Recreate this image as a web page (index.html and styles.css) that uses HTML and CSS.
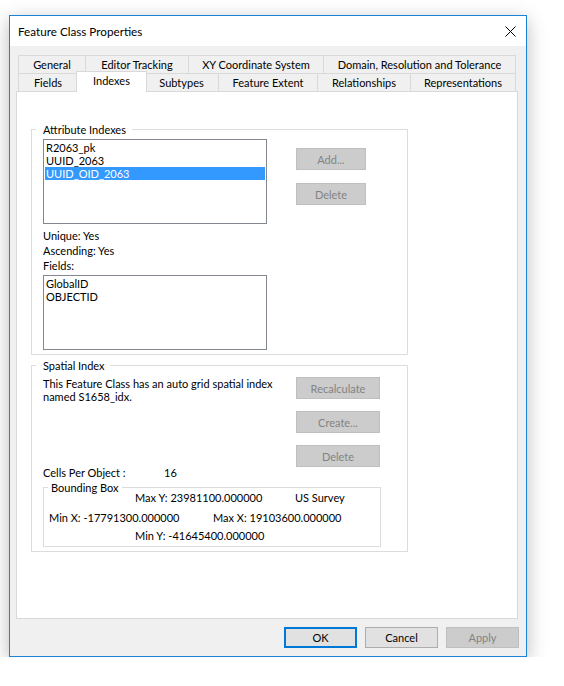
FILE: index.html
```html
<!DOCTYPE html>
<html>
<head>
<meta charset="utf-8">
<title>Feature Class Properties</title>
<link rel="stylesheet" href="styles.css">
</head>
<body>
<div class="window">
  <div class="titlebar">
    <span class="title">Feature Class Properties</span>
    <svg class="close" viewBox="0 0 11 11" width="11" height="11"><path d="M0.5 0.5 L10.5 10.5 M10.5 0.5 L0.5 10.5" stroke="#000" stroke-width="1" fill="none"/></svg>
  </div>
  <div class="tabs">
    <div class="tabrow">
      <div class="tab first t-general">General</div>
      <div class="tab t-editor">Editor Tracking</div>
      <div class="tab t-xy">XY Coordinate System</div>
      <div class="tab t-domain">Domain, Resolution and Tolerance</div>
    </div>
    <div class="tabrow">
      <div class="tab first t-fields">Fields</div>
      <div class="tab active">Indexes</div>
      <div class="tab t-subtypes">Subtypes</div>
      <div class="tab t-extent">Feature Extent</div>
      <div class="tab t-rel">Relationships</div>
      <div class="tab t-rep">Representations</div>
    </div>
  </div>
  <div class="panel">
    <div class="group g-attr">
      <span class="legend">Attribute Indexes</span>
      <div class="attr-body">
        <div class="attr-left">
          <div class="listbox list-idx">
            <div class="item">R2063_pk</div>
            <div class="item">UUID_2063</div>
            <div class="item selected">UUID_OID_2063</div>
          </div>
          <div class="labels">
            <div class="label">Unique: Yes</div>
            <div class="label">Ascending: Yes</div>
            <div class="label">Fields:</div>
          </div>
          <div class="listbox list-fields">
            <div class="item">GlobalID</div>
            <div class="item">OBJECTID</div>
          </div>
        </div>
        <div class="btncol attr-btns">
          <button class="btn disabled b-small">Add...</button>
          <button class="btn disabled b-small">Delete</button>
        </div>
      </div>
    </div>
    <div class="group g-spatial">
      <span class="legend legend-sp">Spatial Index</span>
      <div class="spatial-top">
        <div class="spatial-left">
          <div class="desc">This Feature Class has an auto grid spatial index<br>named S1658_idx.</div>
          <div class="cells"><span class="cells-label">Cells Per Object :</span><span>16</span></div>
        </div>
        <div class="btncol sp-btns">
          <button class="btn disabled b-wide">Recalculate</button>
          <button class="btn disabled b-wide">Create...</button>
          <button class="btn disabled b-wide">Delete</button>
        </div>
      </div>
      <div class="bbox">
        <span class="legend legend-bb">Bounding Box</span>
        <div class="bb-row bb-r1"><span class="bb-maxy">Max Y: 23981100.000000</span><span>US Survey</span></div>
        <div class="bb-row bb-r2"><span class="bb-minx">Min X: -17791300.000000</span><span>Max X: 19103600.000000</span></div>
        <div class="bb-row bb-r3"><span>Min Y: -41645400.000000</span></div>
      </div>
    </div>
  </div>
  <div class="footer">
    <button class="btn b-foot btn-ok">OK</button>
    <button class="btn b-foot">Cancel</button>
    <button class="btn b-foot disabled">Apply</button>
  </div>
</div>
</body>
</html>
```
FILE: styles.css
```css
html, body {
  margin: 0;
  padding: 0;
  background: #ffffff;
}
body {
  font-family: Lato, "Noto Sans", "DejaVu Sans", sans-serif;
  font-size: 11px;
  color: #000;
  overflow: hidden;
}
.window {
  box-sizing: border-box;
  width: 518px;
  height: 642px;
  margin: 15px 0 0 9px;
  border: 1px solid #1883d7;
  background: #f0f0f0;
  box-shadow: 0 5px 18px rgba(0, 0, 0, 0.28);
  display: flex;
  flex-direction: column;
}
.titlebar {
  height: 30px;
  background: #fff;
  display: flex;
  align-items: center;
  justify-content: space-between;
  padding: 0 10px 0 8px;
}
.title {
  line-height: 30px;
  font-size: 11.7px;
}
.close {
  display: block;
}
.tabs {
  margin: 9px 0 0 8px;
}
.tabrow {
  display: flex;
  align-items: flex-start;
  height: 18px;
}
.tab {
  box-sizing: border-box;
  height: 18px;
  border-top: 1px solid #d9d9d9;
  border-right: 1px solid #d9d9d9;
  background: #f0f0f0;
  text-align: center;
  line-height: 17px;
  white-space: nowrap;
}
.tab.first {
  border-left: 1px solid #d9d9d9;
}
.t-general { width: 68px; }
.t-editor { width: 103px; }
.t-xy { width: 135px; }
.t-domain { width: 192px; }
.t-fields { width: 60px; }
.t-subtypes { width: 74px; }
.t-extent { width: 99px; }
.t-rel { width: 93px; }
.t-rep { width: 105px; }
.tab.active {
  position: relative;
  z-index: 1;
  width: 71px;
  height: 21px;
  margin: -2px -2px -1px -2px;
  border-left: 1px solid #d9d9d9;
  background: #fff;
  padding-bottom: 3px;
}
.panel {
  box-sizing: border-box;
  width: 502px;
  height: 528px;
  margin-left: 6px;
  background: #fff;
  border: 1px solid #d9d9d9;
  padding: 37px 0 0 14px;
}
.group {
  position: relative;
  box-sizing: border-box;
  width: 377px;
  border: 1px solid #dcdcdc;
}
.legend {
  position: absolute;
  top: -8px;
  left: 4px;
  line-height: 15px;
  padding: 0 6px 0 7px;
  background: #fff;
  white-space: nowrap;
}
.legend-sp {
  padding-right: 5px;
}
.g-attr {
  height: 226px;
  padding: 9px 0 0 11px;
}
.attr-body {
  display: flex;
}
.attr-left {
  width: 224px;
}
.listbox {
  box-sizing: border-box;
  border: 1px solid #828790;
  padding: 1px;
  background: #fff;
}
.list-idx {
  height: 85px;
}
.list-fields {
  height: 75px;
  margin-top: 2px;
}
.item {
  line-height: 13px;
  padding-left: 1px;
  white-space: nowrap;
}
.item.selected {
  background: #3399ff;
  color: #fff;
}
.labels {
  margin-top: 4px;
}
.label {
  line-height: 15px;
}
.btncol {
  display: flex;
  flex-direction: column;
}
.attr-btns {
  gap: 13px;
  margin: 9px 0 0 29px;
}
.btn {
  box-sizing: border-box;
  font: inherit;
  height: 22px;
  padding: 0;
  margin: 0;
  border: 1px solid #adadad;
  background: #e1e1e1;
  color: #000;
}
.btn.disabled {
  background: #cccccc;
  border-color: #bfbfbf;
  color: #838383;
}
.b-small { width: 70px; }
.b-wide { width: 84px; }
.g-spatial {
  height: 187px;
  margin-top: 10px;
  padding: 11px 0 0 11px;
}
.spatial-top {
  display: flex;
  height: 102px;
}
.spatial-left {
  width: 253px;
  display: flex;
  flex-direction: column;
  justify-content: space-between;
}
.desc {
  line-height: 13px;
  white-space: nowrap;
}
.cells {
  display: flex;
  line-height: 13px;
}
.cells-label {
  width: 121px;
}
.sp-btns {
  gap: 12px;
}
.bbox {
  position: relative;
  box-sizing: border-box;
  width: 338px;
  height: 60px;
  margin-top: 8px;
  border: 1px solid #dcdcdc;
  padding-top: 2px;
}
.legend-bb {
  padding: 0 3px;
}
.bb-row {
  display: flex;
  line-height: 15px;
  white-space: nowrap;
}
.bb-r1 {
  height: 20px;
  padding-left: 91px;
}
.bb-r2 {
  height: 18px;
  padding-left: 5px;
}
.bb-r3 {
  padding-left: 91px;
}
.bb-maxy { width: 160px; }
.bb-minx { width: 164px; }
.footer {
  display: flex;
  justify-content: flex-end;
  gap: 8px;
  padding: 8px 7px 0 0;
}
.b-foot {
  width: 73px;
  height: 21px;
}
.btn-ok {
  border: 2px solid #0078d7;
}
```
